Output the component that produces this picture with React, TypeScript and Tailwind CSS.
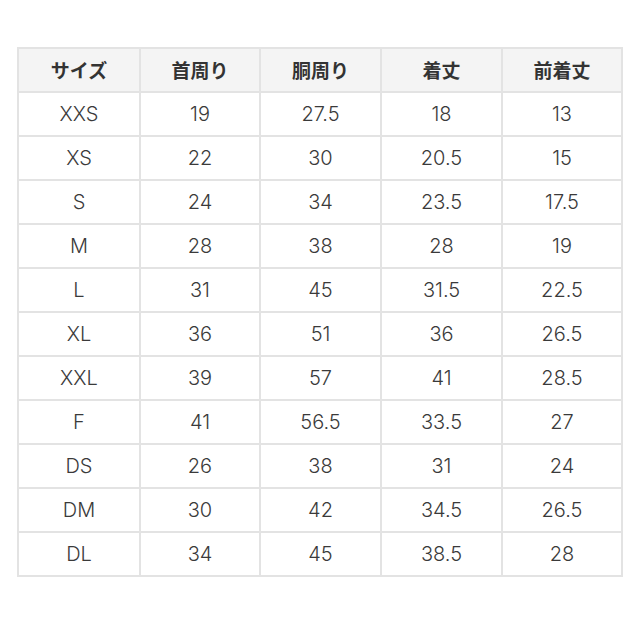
import React from 'react';

const headers = ['サイズ', '首周り', '胴周り', '着丈', '前着丈'];

const rows: string[][] = [
  ['XXS', '19', '27.5', '18', '13'],
  ['XS', '22', '30', '20.5', '15'],
  ['S', '24', '34', '23.5', '17.5'],
  ['M', '28', '38', '28', '19'],
  ['L', '31', '45', '31.5', '22.5'],
  ['XL', '36', '51', '36', '26.5'],
  ['XXL', '39', '57', '41', '28.5'],
  ['F', '41', '56.5', '33.5', '27'],
  ['DS', '26', '38', '31', '24'],
  ['DM', '30', '42', '34.5', '26.5'],
  ['DL', '34', '45', '38.5', '28'],
];

const cell = 'h-[44px] flex items-center justify-center border-r-2 border-b-2 border-[#e3e3e3]';

export default function App() {
  return (
    <div className="w-[640px] h-[640px] bg-white pt-[47px] pl-[17px] text-[#333]">
      <div className="grid grid-cols-[122px_120px_121px_121px_120px] w-fit border-l-2 border-t-2 border-[#e3e3e3]">
        {headers.map((h) => (
          <div
            key={h}
            className={`${cell} bg-[#f4f4f4] text-[19px] font-bold font-['Noto_Sans_CJK_JP',sans-serif]`}
          >
            {h}
          </div>
        ))}
        {rows.map((r, i) =>
          r.map((v, j) => (
            <div
              key={`${i}-${j}`}
              className={`${cell} text-[20px] font-light text-[#3a3a3a] font-['Inter','Noto_Sans_CJK_JP',sans-serif]`}
            >
              {v}
            </div>
          ))
        )}
      </div>
    </div>
  );
}
